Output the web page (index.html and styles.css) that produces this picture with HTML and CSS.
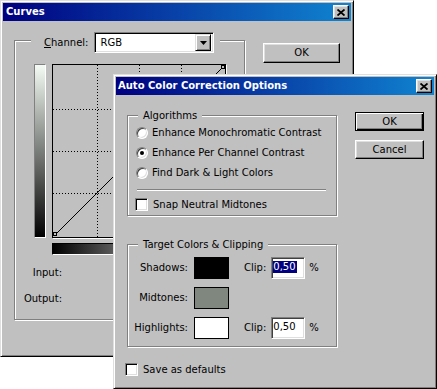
FILE: index.html
```html
<!DOCTYPE html>
<html>
<head>
    <title>Curves</title>
    <link rel="stylesheet" href="styles.css">
</head>
<body>
    <div class="desktop">
        <div class="window curves">
            <div class="titlebar">
                <span class="title">Curves</span>
                <span class="close-btn"><svg width="8" height="7"><path d="M0.5 0.5L7.5 6.5M7.5 0.5L0.5 6.5" stroke="#000" stroke-width="1.8"/></svg></span>
            </div>
            <div class="curves-body">
                <div class="group channel-group">
                    <div class="channel-legend">
                        <label class="channel-label"><u>C</u>hannel:</label>
                        <div class="select">
                            <span class="select-value">RGB</span>
                            <span class="select-arrow"><svg width="7" height="4"><path d="M0 0h7L3.5 4z" fill="#000"/></svg></span>
                        </div>
                    </div>
                    <div class="graph-row">
                        <div class="vbar"></div>
                        <div class="graph-col">
                            <div class="graph">
                                <svg width="172" height="172">
                                    <g stroke="#000" stroke-dasharray="1 2" shape-rendering="crispEdges">
                                        <path d="M44.5 0V172M86.5 0V172M128.5 0V172"/>
                                        <path d="M0 44.5H172M0 86.5H172M0 128.5H172"/>
                                    </g>
                                    <path d="M2 170L170 2" stroke="#000" stroke-width="1"/>
                                    <rect x="0.5" y="167.5" width="3" height="3" fill="#c0c0c0" stroke="#000"/>
                                    <rect x="168.5" y="0.5" width="3" height="3" fill="#c0c0c0" stroke="#000"/>
                                </svg>
                            </div>
                            <div class="hbar"></div>
                        </div>
                    </div>
                    <div class="readouts">
                        <span>Input:</span>
                        <span>Output:</span>
                    </div>
                </div>
                <div class="btn-col">
                    <button class="btn curves-ok">OK</button>
                </div>
            </div>
        </div>

        <div class="window auto">
            <div class="titlebar">
                <span class="title">Auto Color Correction Options</span>
                <span class="close-btn"><svg width="8" height="7"><path d="M0.5 0.5L7.5 6.5M7.5 0.5L0.5 6.5" stroke="#000" stroke-width="1.8"/></svg></span>
            </div>
            <div class="auto-body">
                <div class="auto-main">
                    <div class="group algo-group">
                        <div class="group-legend">Algorithms</div>
                        <div class="option"><span class="radio"></span>Enhance Monochromatic Contrast</div>
                        <div class="option"><span class="radio checked"></span>Enhance Per Channel Contrast</div>
                        <div class="option"><span class="radio"></span>Find Dark &amp; Light Colors</div>
                        <div class="separator"></div>
                        <div class="option check-row"><span class="check"></span>Snap Neutral Midtones</div>
                    </div>
                    <div class="group target-group">
                        <div class="group-legend">Target Colors &amp; Clipping</div>
                        <div class="color-rows">
                            <div class="color-row">
                                <span class="color-label">Shadows:</span>
                                <span class="swatch shadows"></span>
                                <span class="clip-label">Clip:</span>
                                <span class="field"><span class="selected">0,50</span></span>
                                <span class="pct">%</span>
                            </div>
                            <div class="color-row">
                                <span class="color-label">Midtones:</span>
                                <span class="swatch midtones"></span>
                            </div>
                            <div class="color-row">
                                <span class="color-label">Highlights:</span>
                                <span class="swatch highlights"></span>
                                <span class="clip-label">Clip:</span>
                                <span class="field">0,50</span>
                                <span class="pct">%</span>
                            </div>
                        </div>
                    </div>
                    <div class="save-row"><span class="check"></span>Save as defaults</div>
                </div>
                <div class="btn-col dlg-btns">
                    <button class="btn btn-default">OK</button>
                    <button class="btn">Cancel</button>
                </div>
            </div>
        </div>
    </div>
</body>
</html>
```

FILE: styles.css
```css
* {
    box-sizing: border-box;
}

body {
    margin: 0;
    background-color: #fff;
    font-family: "DejaVu Sans", Verdana, sans-serif;
    font-size: 10px;
    line-height: 12px;
    color: #000;
}

.desktop {
    position: relative;
    width: 437px;
    height: 389px;
    overflow: hidden;
}

/* classic raised window frame */
.window {
    position: absolute;
    background-color: #c0c0c0;
    border: 1px solid;
    border-color: #dfdfdf #000 #000 #dfdfdf;
    box-shadow: inset 1px 1px #fff, inset -1px -1px #808080;
    padding: 2px;
}

.curves {
    left: 0;
    top: 0;
    width: 354px;
    height: 357px;
}

.auto {
    left: 113px;
    top: 74px;
    width: 324px;
    height: 315px;
}

.titlebar {
    height: 18px;
    display: flex;
    align-items: center;
    justify-content: space-between;
    padding: 0 2px 0 3px;
    background: linear-gradient(to right, #000080, #1084d0);
}

.auto .titlebar {
    padding-left: 2px;
}

.title {
    color: #fff;
    font-weight: bold;
}

.close-btn {
    width: 16px;
    height: 14px;
    display: flex;
    align-items: center;
    justify-content: center;
    background-color: #c0c0c0;
    border: 1px solid;
    border-color: #fff #000 #000 #fff;
    box-shadow: inset -1px -1px #808080, inset 1px 1px #dfdfdf;
}

.btn {
    font: inherit;
    color: #000;
    padding: 0;
    background-color: #c0c0c0;
    border: 1px solid;
    border-color: #fff #000 #000 #fff;
    box-shadow: inset -1px -1px #808080, inset 1px 1px #dfdfdf;
}

.btn-default {
    border-color: #000;
    box-shadow: inset 1px 1px #fff, inset -1px -1px #000, inset -2px -2px #808080;
}

/* etched group box */
.group {
    border: 1px solid #808080;
    box-shadow: inset 1px 1px #fff, 1px 1px #fff;
}

.group-legend {
    width: fit-content;
    margin: -7px 0 0 10px;
    padding: 0 5px;
    line-height: 13px;
    background-color: #c0c0c0;
}

/* Curves */
.curves-body {
    display: flex;
    align-items: flex-start;
    padding: 19px 0 0 11px;
}

.channel-group {
    width: 231px;
    height: 280px;
}

.channel-legend {
    display: flex;
    align-items: center;
    width: fit-content;
    height: 21px;
    margin: -9px 0 0 16px;
    padding: 0 6px 0 13px;
    background-color: #c0c0c0;
}

.select {
    width: 120px;
    height: 21px;
    margin-left: 6px;
    display: flex;
    align-items: center;
    justify-content: space-between;
    padding: 2px;
    background-color: #fff;
    border: 1px solid;
    border-color: #808080 #fff #fff #808080;
    box-shadow: inset 1px 1px #000, inset -1px -1px #dfdfdf;
}

.select-value {
    padding-left: 3px;
}

.select-arrow {
    width: 16px;
    height: 17px;
    display: flex;
    align-items: center;
    justify-content: center;
    background-color: #c0c0c0;
    border: 1px solid;
    border-color: #dfdfdf #000 #000 #dfdfdf;
    box-shadow: inset 1px 1px #fff, inset -1px -1px #808080;
}

.graph-row {
    display: flex;
    gap: 6px;
    margin: 11px 0 0 19px;
}

.vbar {
    width: 12px;
    height: 174px;
    border: 1px solid;
    border-color: #808080 #fff #fff #808080;
    background: linear-gradient(#f4fbf4, #000);
}

.graph {
    width: 174px;
    height: 174px;
    border: 1px solid #000;
    box-shadow: 1px 1px #fff;
}

.graph svg {
    display: block;
}

.hbar {
    width: 174px;
    height: 12px;
    margin-top: 5px;
    border: 1px solid;
    border-color: #000 #fff #fff #000;
    background: linear-gradient(to right, #000, #fff);
}

.readouts {
    display: flex;
    flex-direction: column;
    align-items: flex-end;
    gap: 14px;
    width: 47px;
    margin-top: 12px;
}

.btn-col {
    display: flex;
    flex-direction: column;
    margin-left: 18px;
}

.curves-ok {
    width: 77px;
    height: 20px;
    margin-top: 3px;
}

/* Auto Color Correction Options */
.auto-body {
    display: flex;
    align-items: flex-start;
    padding: 17px 0 0 11px;
}

.auto-main {
    width: 210px;
    margin-top: 3px;
}

.algo-group {
    height: 101px;
}

.option {
    display: flex;
    align-items: center;
    gap: 4px;
    height: 20px;
    margin-left: 8px;
}

.algo-group .group-legend {
    margin-bottom: 1px;
}

.radio {
    position: relative;
    width: 12px;
    height: 12px;
    border-radius: 50%;
    background-color: #fff;
    border: 1px solid;
    border-color: #808080 #fff #fff #808080;
    box-shadow: inset 1px 1px #404040, inset -1px -1px #dfdfdf;
}

.radio.checked::after {
    content: "";
    position: absolute;
    left: 3px;
    top: 3px;
    width: 4px;
    height: 4px;
    border-radius: 50%;
    background-color: #000;
}

.separator {
    width: 189px;
    height: 2px;
    margin: 6px 0 0 9px;
    border-top: 1px solid #808080;
    border-bottom: 1px solid #fff;
}

.check-row {
    gap: 5px;
    height: 19px;
    margin: 4px 0 0 7px;
}

.check {
    width: 13px;
    height: 13px;
    background-color: #fff;
    border: 1px solid;
    border-color: #808080 #fff #fff #808080;
    box-shadow: inset 1px 1px #000, inset -1px -1px #dfdfdf;
}

.target-group {
    height: 103px;
    margin-top: 28px;
}

.color-rows {
    display: flex;
    flex-direction: column;
    gap: 8px;
    margin-top: 6px;
}

.color-row {
    display: flex;
    align-items: center;
    height: 22px;
}

.color-label {
    width: 60px;
    margin-right: 6px;
    text-align: right;
}

.swatch {
    width: 35px;
    height: 22px;
    border: 1px solid #000;
}

.shadows {
    background-color: #000;
}

.midtones {
    background-color: #7f877f;
}

.highlights {
    background-color: #fff;
}

.clip-label {
    margin-left: 15px;
}

.field {
    width: 34px;
    height: 22px;
    margin-left: 5px;
    padding: 3px 1px;
    background-color: #fff;
    border: 1px solid;
    border-color: #808080 #fff #fff #808080;
    box-shadow: inset 1px 1px #404040, inset -1px -1px #dfdfdf;
}

.selected {
    display: inline-block;
    background-color: #000080;
    color: #fff;
    padding-right: 1px;
}

.pct {
    margin-left: 4px;
}

.save-row {
    display: flex;
    align-items: center;
    gap: 5px;
    height: 13px;
    margin: 16px 0 0 -2px;
}

.dlg-btns {
    gap: 9px;
}

.dlg-btns .btn {
    width: 69px;
    height: 19px;
}
```
